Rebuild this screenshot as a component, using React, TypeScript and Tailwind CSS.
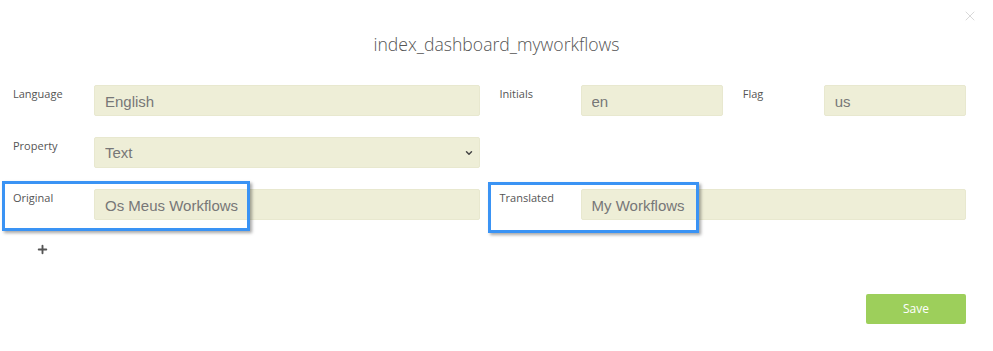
import { Plus, X, ChevronDown } from 'lucide-react';

const labelCls = "pt-[1px] text-[11px] leading-[16px] text-[#555] font-['Open_Sans',sans-serif]";
const inputCls =
  "h-[31px] w-full rounded-[2px] border border-[#e8e8cf] bg-[#eeeed7] pl-[10px] pt-[1px] text-[15px] text-[#777] font-['Liberation_Sans',Arial,sans-serif] outline-none";

function Field({ label, value }: { label: string; value: string }) {
  return (
    <div className="flex">
      <div className={`w-[81px] shrink-0 ${labelCls}`}>{label}</div>
      <input className={inputCls} defaultValue={value} readOnly />
    </div>
  );
}

export default function App() {
  return (
    <div className="relative h-[351px] w-[993px] overflow-hidden bg-white">
      <button className="absolute right-[15px] top-[8px] text-[#cfcfcf]">
        <X className="h-[16px] w-[16px]" strokeWidth={1.2} />
      </button>

      <h1 className="pt-[32px] text-center text-[17.6px] font-light leading-[24px] text-[#555] font-['Open_Sans',sans-serif]">
        index_dashboard_myworkflows
      </h1>

      <div className="mt-[29px] grid grid-cols-2 gap-x-[20px] gap-y-[21px] pl-[13px] pr-[27px]">
        <Field label="Language" value="English" />
        <div className="grid grid-cols-2 gap-x-[20px]">
          <Field label="Initials" value="en" />
          <Field label="Flag" value="us" />
        </div>

        <div className="flex">
          <div className={`w-[81px] shrink-0 ${labelCls}`}>Property</div>
          <div className="relative w-full">
            <select className={`${inputCls} appearance-none pl-[4px]`} defaultValue="Text">
              <option>Text</option>
            </select>
            <ChevronDown
              className="pointer-events-none absolute right-[6px] top-[11px] h-[10px] w-[10px] text-[#444]"
              strokeWidth={3.5}
            />
          </div>
        </div>
        <div />

        <Field label="Original" value="Os Meus Workflows" />
        <Field label="Translated" value="My Workflows" />
      </div>

      <div className="mt-[23px] pl-[36px] text-[#555]">
        <Plus className="h-[13px] w-[13px]" strokeWidth={3.5} />
      </div>

      <div className="mt-[38px] flex justify-end pr-[27px]">
        <button className="h-[30px] w-[100px] rounded-[2px] bg-[#9dcf5b] text-[12px] text-white font-['Open_Sans',sans-serif]">
          Save
        </button>
      </div>

      {/* annotation highlights */}
      <div className="pointer-events-none absolute left-[2px] top-[181px] h-[50px] w-[248px] border-[3px] border-[#3a93f4] shadow-[2px_2px_3px_rgba(0,0,0,0.35)]" />
      <div className="pointer-events-none absolute left-[488px] top-[182px] h-[51px] w-[211px] border-[3px] border-[#3a93f4] shadow-[2px_2px_3px_rgba(0,0,0,0.35)]" />
    </div>
  );
}
